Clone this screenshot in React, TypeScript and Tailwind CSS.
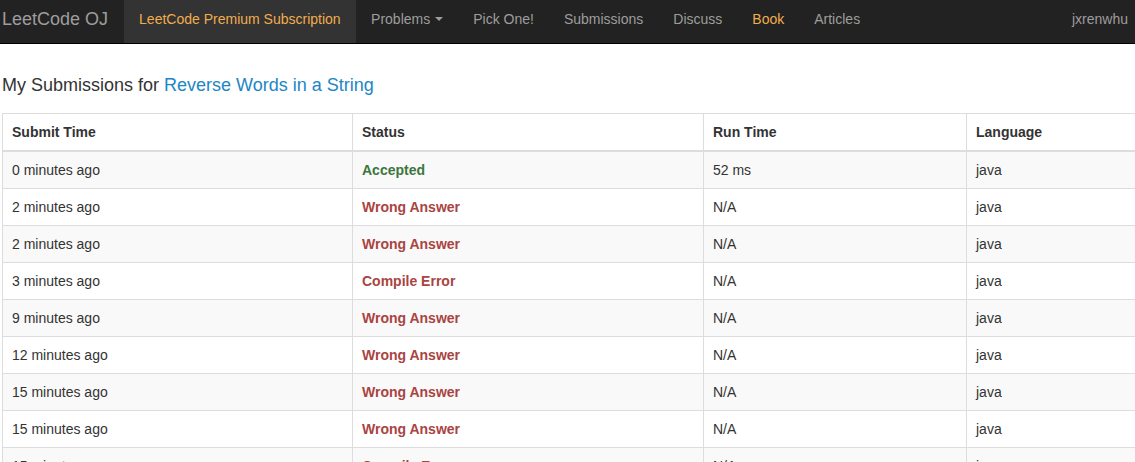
import React from "react";

const rows = [
  { time: "0 minutes ago", status: "Accepted", run: "52 ms", lang: "java" },
  { time: "2 minutes ago", status: "Wrong Answer", run: "N/A", lang: "java" },
  { time: "2 minutes ago", status: "Wrong Answer", run: "N/A", lang: "java" },
  { time: "3 minutes ago", status: "Compile Error", run: "N/A", lang: "java" },
  { time: "9 minutes ago", status: "Wrong Answer", run: "N/A", lang: "java" },
  { time: "12 minutes ago", status: "Wrong Answer", run: "N/A", lang: "java" },
  { time: "15 minutes ago", status: "Wrong Answer", run: "N/A", lang: "java" },
  { time: "15 minutes ago", status: "Wrong Answer", run: "N/A", lang: "java" },
  { time: "15 minutes ago", status: "Compile Error", run: "N/A", lang: "java" },
];

const item = "flex items-center px-[15px] pb-[5px]";

const Navbar = () => (
  <nav className="flex h-[44px] items-stretch border-b border-black bg-[#222] text-[14px] leading-5 text-[#9d9d9d]">
    <div className="flex items-center pl-[2px] pr-4 pb-[5px] text-[18px] text-[#9d9d9d]">LeetCode OJ</div>
    <div className={`${item} w-[232px] bg-[#333] text-[#f0ad4e]`}>LeetCode Premium Subscription</div>
    <div className={item}>
      Problems
      <span className="ml-[5px] inline-block h-0 w-0 border-x-4 border-t-4 border-x-transparent border-t-[#9d9d9d]" />
    </div>
    <div className={item}>Pick One!</div>
    <div className={item}>Submissions</div>
    <div className={item}>Discuss</div>
    <div className={`${item} text-[#f0ad4e]`}>Book</div>
    <div className={item}>Articles</div>
    <div className="ml-auto flex items-center pr-[7px] pb-[5px]">jxrenwhu</div>
  </nav>
);

export default function App() {
  return (
    <div className="h-[462px] w-[1135px] overflow-hidden bg-white font-['Liberation_Sans',Arial,sans-serif] text-[#333]">
      <Navbar />
      <div className="pl-[2px]">
        <h3 className="mt-[31px] mb-[18px] text-[18px] leading-5 text-[#333]">
          My Submissions for <span className="text-[#1c86c6]">Reverse Words in a String</span>
        </h3>
        <table className="w-[1260px] table-fixed border-collapse border border-[#ddd] text-[14px] leading-5">
          <colgroup>
            <col className="w-[350px]" />
            <col className="w-[351px]" />
            <col className="w-[263px]" />
            <col />
          </colgroup>
          <thead>
            <tr>
              <th className="border border-b-2 border-[#ddd] px-[9px] py-2 text-left font-bold">Submit Time</th>
              <th className="border border-b-2 border-[#ddd] px-[9px] py-2 text-left font-bold">Status</th>
              <th className="border border-b-2 border-[#ddd] px-[9px] py-2 text-left font-bold">Run Time</th>
              <th className="border border-b-2 border-[#ddd] px-[9px] py-2 text-left font-bold">Language</th>
            </tr>
          </thead>
          <tbody>
            {rows.map((r, i) => (
              <tr key={i} className={i % 2 === 0 ? "bg-[#f9f9f9]" : "bg-white"}>
                <td className="border border-[#ddd] px-[9px] py-2">{r.time}</td>
                <td
                  className={`border border-[#ddd] px-[9px] py-2 font-bold ${
                    r.status === "Accepted" ? "text-[#3c763d]" : "text-[#a94442]"
                  }`}
                >
                  {r.status}
                </td>
                <td className="border border-[#ddd] px-[9px] py-2">{r.run}</td>
                <td className="border border-[#ddd] px-[9px] py-2">{r.lang}</td>
              </tr>
            ))}
          </tbody>
        </table>
      </div>
    </div>
  );
}
